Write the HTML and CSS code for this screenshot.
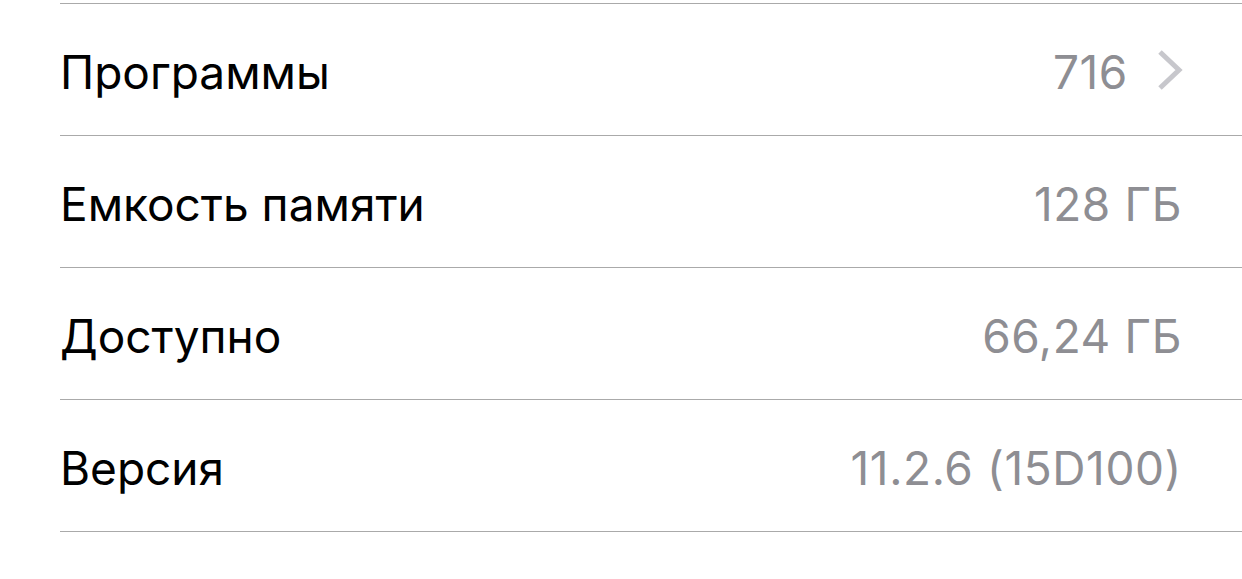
FILE: index.html
```html
<!DOCTYPE html>
<html lang="ru">
<head>
<meta charset="utf-8">
<link rel="stylesheet" href="styles.css">
</head>
<body>
<ul class="list">
  <li class="row">
    <span class="label">Программы</span>
    <span class="value">716</span>
    <svg class="chevron" width="28" height="42" viewBox="0 0 28 42"><path d="M4 3 L23 21 L4 39" fill="none" stroke="#c7c7cc" stroke-width="5"/></svg>
  </li>
  <li class="row">
    <span class="label">Емкость памяти</span>
    <span class="value">128 ГБ</span>
  </li>
  <li class="row">
    <span class="label">Доступно</span>
    <span class="value">66,24 ГБ</span>
  </li>
  <li class="row">
    <span class="label">Версия</span>
    <span class="value">11.2.6 (15D100)</span>
  </li>
</ul>
</body>
</html>
```
FILE: styles.css
```css
html, body {
  margin: 0;
  padding: 0;
  background: #ffffff;
}
.list {
  list-style: none;
  margin: 3px 0 0 60px;
  padding: 0;
  border-top: 1px solid #aaaaaa;
  font-family: Inter, "Noto Sans", sans-serif;
}
.row {
  display: flex;
  align-items: center;
  box-sizing: border-box;
  height: 132px;
  padding-top: 4px;
  border-bottom: 1px solid #aaaaaa;
  padding-right: 60px;
  font-size: 46px;
}
.label {
  flex: 1;
  color: #000000;
}
.value {
  color: #8e8e93;
  letter-spacing: 0.6px;
}
.chevron {
  margin-left: 28px;
  margin-right: -2px;
  margin-top: -4px;
}
```
